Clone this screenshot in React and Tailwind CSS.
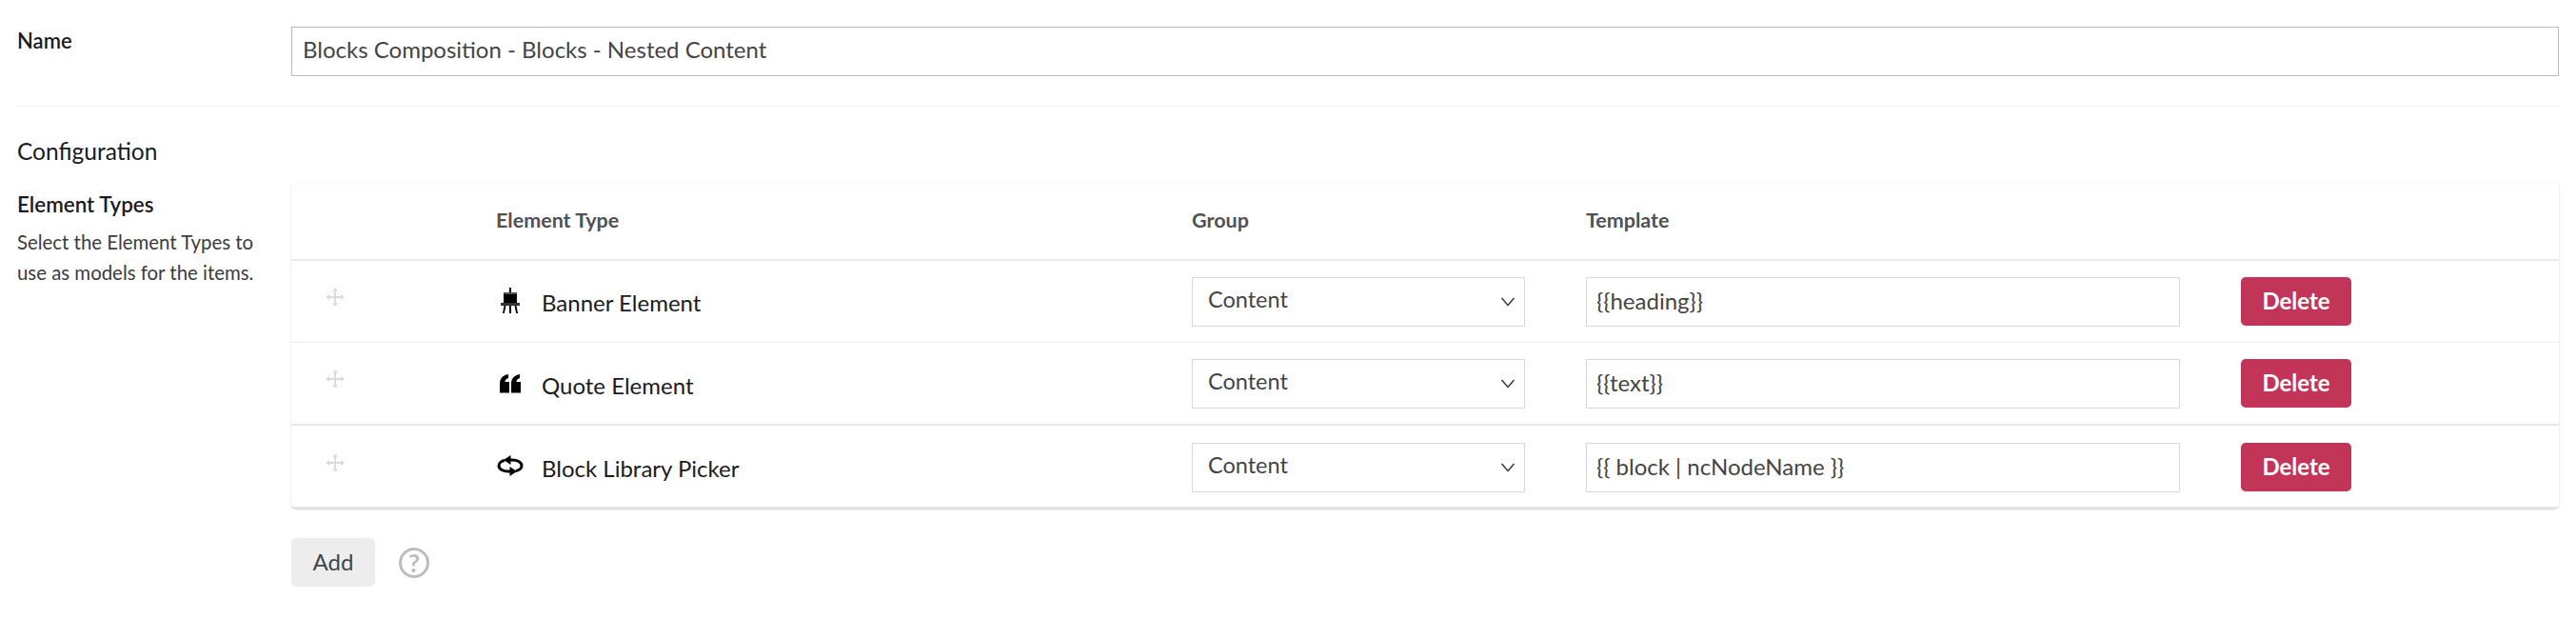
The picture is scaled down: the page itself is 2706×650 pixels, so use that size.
const rows = [
  { name: "Banner Element", template: "{{heading}}", icon: "easel", iconTop: "-mt-[3px]", textTop: "pt-[2px]", border: "border-b border-[#eeeeef]", top: "pt-[17px]", h: "h-[86px]" },
  { name: "Quote Element", template: "{{text}}", icon: "quote", iconTop: "mt-0", textTop: "pt-[3px]", border: "border-b-2 border-[#e9e9eb]", top: "pt-[17px]", h: "h-[87px]" },
  { name: "Block Library Picker", template: "{{ block | ncNodeName }}", icon: "sync", iconTop: "-mt-[4px]", textTop: "pt-[1px]", border: "border-b-2 border-[#e4e4e6]", top: "pt-[18px]", h: "h-[87px]" },
];

const DragIcon = () => (
  <svg width="20" height="20" viewBox="0 0 20 20" className="text-[#dcdcde] mt-[11px] ml-[36px]" fill="currentColor">
    <path d="M9 4h2v5h5v2h-5v5H9v-5H4V9h5z" />
    <path d="M10 0l3 4H7zM10 20l-3-4h6zM0 10l4-3v6zM20 10l-4 3V7z" />
  </svg>
);

const RowIcon = ({ type }) => {
  if (type === "easel") {
    return (
      <svg width="20" height="27" viewBox="0 0 20 27" fill="#000">
        <rect x="9" y="0" width="2" height="5" />
        <rect x="3" y="5" width="14" height="2" fill="#555" />
        <rect x="3" y="7" width="14" height="9" />
        <rect x="0" y="16" width="20" height="3" fill="#333" />
        <path d="M3.500 19h2L3.800 27H2zM9 19h2v8H9zM14.500 19h2L18 27h-1.800z" />
      </svg>
    );
  }
  if (type === "quote") {
    return (
      <svg width="22" height="20" viewBox="0 0 22 20" fill="#000">
        <path d="M0 19.500V10C0 4.500 3 1 9 0v4C6.500 4.800 5.500 6.300 5.500 8H10v11.500zM12 19.500V10c0-5.500 3-9 9-10v4c-2.500.8-3.500 2.300-3.500 4H22v11.500z" />
      </svg>
    );
  }
  return (
    <svg width="28" height="22" viewBox="0 0 28 22" fill="none" stroke="#000" strokeWidth="3">
      <path d="M14 5h2c5 0 10 2 10 6 0 3-3 5-6 5.500" />
      <path d="M14 17h-2C7 17 2 15 2 11c0-3 3-5 6-5.500" />
      <path d="M14.500 0L7 5l7.500 5z" fill="#000" stroke="none" />
      <path d="M13.500 12L21 17l-7.500 5z" fill="#000" stroke="none" />
    </svg>
  );
};

const GroupSelect = () => (
  <div className="relative w-[350px] h-[52px]">
    <select
      defaultValue="Content"
      className="w-full h-full appearance-none bg-white border border-[#d8d7d9] pl-[16px] pb-[4px] text-[23.500px] text-[#444447] outline-none"
    >
      <option>Content</option>
    </select>
    <svg width="16" height="10" viewBox="0 0 16 10" className="absolute right-[10px] top-[21px]" fill="none" stroke="#303033" strokeWidth="1.4">
      <path d="M1.500 1l6.500 7.500L14.500 1" />
    </svg>
  </div>
);

export default function App() {
  return (
    <div className="min-h-[650px] bg-white px-[18px] font-['Lato',sans-serif] text-[#1b1b1e]">
      <div className="flex pt-[28px] pb-[31px]">
        <div className="w-[288px] pt-[2px] text-[22px] leading-[26px] font-semibold">Name</div>
        <input
          readOnly
          value="Blocks Composition - Blocks - Nested Content"
          className="w-[2382px] h-[52px] border border-[#b9b9bb] px-[11px] pb-[5px] text-[24px] text-[#444447] outline-none"
        />
      </div>
      <div className="border-t border-[#f2f2f3] w-[2671px]" />
      <div className="pt-[32px] text-[24.500px] leading-[30px]">Configuration</div>
      <div className="flex mt-[19px]">
        <div className="w-[288px] pt-[8px]">
          <div className="text-[22.400px] leading-[28px] font-semibold">Element Types</div>
          <p className="mt-[9px] text-[20.400px] leading-[32px] text-[#3c3c3f]">
            Select the Element Types to
            <br />
            use as models for the items.
          </p>
        </div>
        <div className="w-[2382px]">
          <div className="rounded-b-[5px] shadow-[0_1px_2px_rgba(0,0,0,0.18),0_0_3px_rgba(0,0,0,0.03)]">
            <div className="grid grid-cols-[215px_731px_414px_688px_1fr] items-center h-[81px] border-b-2 border-[#e9e9eb] text-[21.500px] font-bold text-[#515054] pb-[2px]">
              <div />
              <div>Element Type</div>
              <div>Group</div>
              <div>Template</div>
              <div />
            </div>
            {rows.map((row) => (
              <div key={row.name} className={`grid grid-cols-[215px_731px_414px_688px_1fr] ${row.h} ${row.top} ${row.border}`}>
                <div><DragIcon /></div>
                <div className="flex items-center h-[52px]">
                  <div className={`w-[30px] flex justify-center ${row.iconTop}`}><RowIcon type={row.icon} /></div>
                  <span className={`ml-[18px] text-[24px] ${row.textTop}`}>{row.name}</span>
                </div>
                <div><GroupSelect /></div>
                <div>
                  <input
                    readOnly
                    value={row.template}
                    className="w-[624px] h-[52px] border border-[#d8d7d9] px-[10px] pb-[4px] text-[24px] text-[#444447] outline-none"
                  />
                </div>
                <div>
                  <button className="w-[116px] h-[51px] rounded-[5px] bg-[#c33558] pb-[2px] text-white text-[24px] font-bold">Delete</button>
                </div>
              </div>
            ))}
          </div>
          <div className="flex items-center mt-[31px]">
            <button className="w-[88px] h-[51px] rounded-[5px] bg-[#ededed] pb-[2px] text-[24px] text-[#444447]">Add</button>
            <div className="ml-[25px] flex items-center justify-center w-[32px] h-[32px] rounded-full border-[3px] border-[#bdbdc0] text-[27px] font-bold text-[#bdbdc0] leading-none">?</div>
          </div>
        </div>
      </div>
    </div>
  );
}
